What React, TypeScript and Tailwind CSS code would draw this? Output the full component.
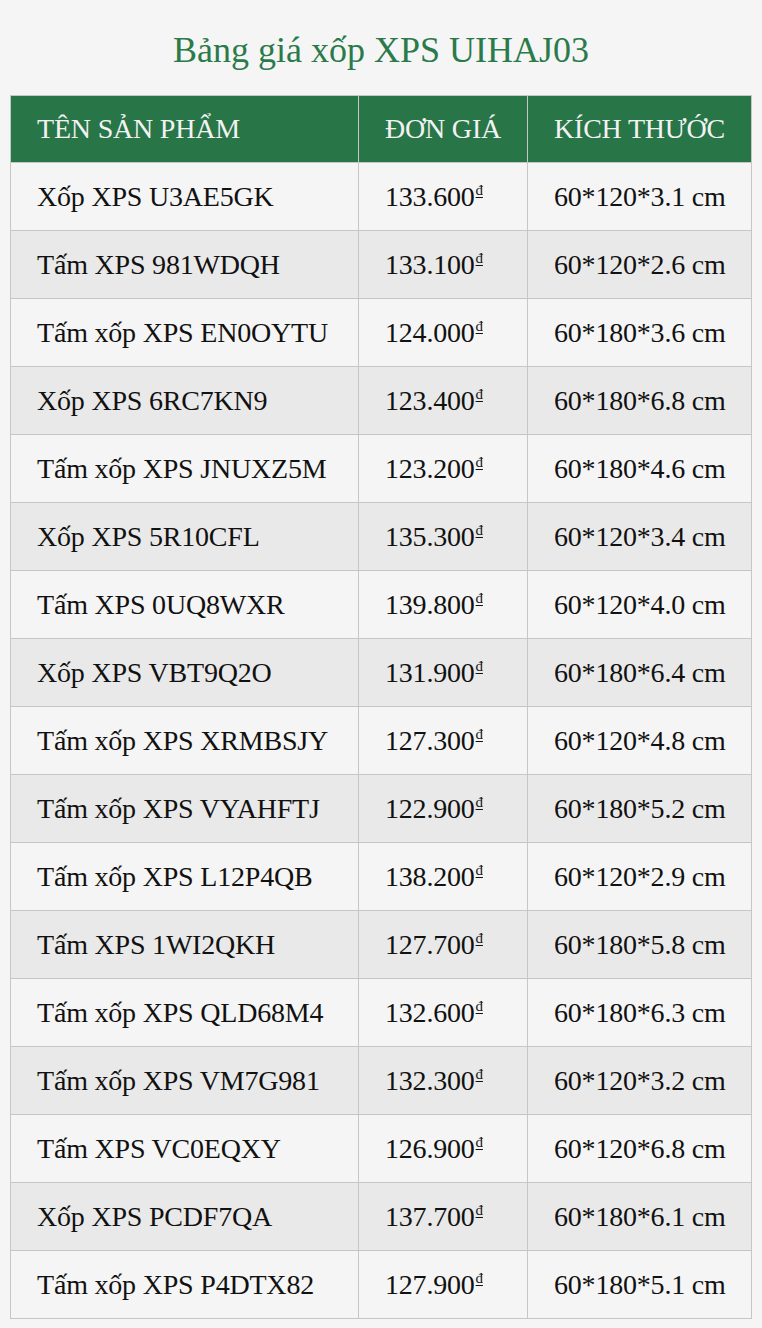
const rows: [string, string, string][] = [
  ["Xốp XPS U3AE5GK", "133.600", "60*120*3.1 cm"],
  ["Tấm XPS 981WDQH", "133.100", "60*120*2.6 cm"],
  ["Tấm xốp XPS EN0OYTU", "124.000", "60*180*3.6 cm"],
  ["Xốp XPS 6RC7KN9", "123.400", "60*180*6.8 cm"],
  ["Tấm xốp XPS JNUXZ5M", "123.200", "60*180*4.6 cm"],
  ["Xốp XPS 5R10CFL", "135.300", "60*120*3.4 cm"],
  ["Tấm XPS 0UQ8WXR", "139.800", "60*120*4.0 cm"],
  ["Xốp XPS VBT9Q2O", "131.900", "60*180*6.4 cm"],
  ["Tấm xốp XPS XRMBSJY", "127.300", "60*120*4.8 cm"],
  ["Tấm xốp XPS VYAHFTJ", "122.900", "60*180*5.2 cm"],
  ["Tấm xốp XPS L12P4QB", "138.200", "60*120*2.9 cm"],
  ["Tấm XPS 1WI2QKH", "127.700", "60*180*5.8 cm"],
  ["Tấm xốp XPS QLD68M4", "132.600", "60*180*6.3 cm"],
  ["Tấm xốp XPS VM7G981", "132.300", "60*120*3.2 cm"],
  ["Tấm XPS VC0EQXY", "126.900", "60*120*6.8 cm"],
  ["Xốp XPS PCDF7QA", "137.700", "60*180*6.1 cm"],
  ["Tấm xốp XPS P4DTX82", "127.900", "60*180*5.1 cm"],
];

const cell = "border border-[#c6c6c6] pl-[26px] pr-0 text-left whitespace-nowrap";

export default function App() {
  return (
    <div className="min-h-[1328px] bg-[#f5f5f5] px-[10px] pt-[24px] font-['Liberation_Serif',serif]">
      <h1 className="text-center text-[36px] leading-[52px] text-[#2a7a4a] mb-[19px]">
        Bảng giá xốp XPS UIHAJ03
      </h1>
      <table className="w-[742px] table-fixed border-collapse text-[28px] tracking-[-0.2px]">
        <colgroup>
          <col className="w-[348px]" />
          <col className="w-[169px]" />
          <col />
        </colgroup>
        <thead>
          <tr className="h-[67px] bg-[#287548] text-[#f2f2f2]">
            <th className={`${cell} font-normal`}>TÊN SẢN PHẨM</th>
            <th className={`${cell} font-normal`}>ĐƠN GIÁ</th>
            <th className={`${cell} font-normal`}>KÍCH THƯỚC</th>
          </tr>
        </thead>
        <tbody className="text-[#111]">
          {rows.map(([name, price, size], i) => (
            <tr key={name} className={`h-[68px] ${i % 2 === 1 ? "bg-[#e9e9e9]" : "bg-[#f5f5f5]"}`}>
              <td className={cell}>{name}</td>
              <td className={cell}>
                {price}
                <span className="ml-[1px] text-[15px] underline underline-offset-[2px] align-[0.7em]">đ</span>
              </td>
              <td className={cell}>{size}</td>
            </tr>
          ))}
        </tbody>
      </table>
    </div>
  );
}
